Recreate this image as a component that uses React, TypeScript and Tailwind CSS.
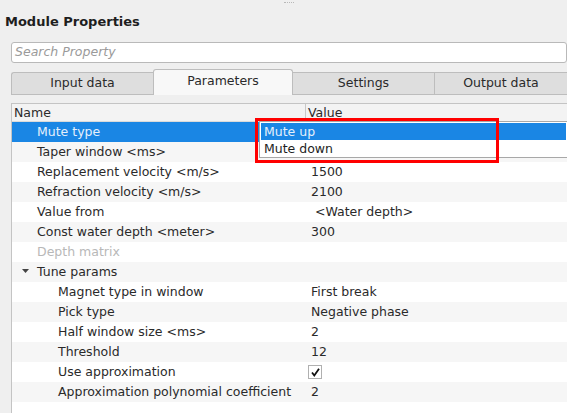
import React from "react";

type Row = { name: string; value?: React.ReactNode; level: number; disabled?: boolean; group?: boolean; selected?: boolean };

const rows: Row[] = [
  { name: "Mute type", level: 1, selected: true },
  { name: "Taper window <ms>", level: 1 },
  { name: "Replacement velocity <m/s>", value: "1500", level: 1 },
  { name: "Refraction velocity <m/s>", value: "2100", level: 1 },
  { name: "Value from", value: " <Water depth>", level: 1 },
  { name: "Const water depth <meter>", value: "300", level: 1 },
  { name: "Depth matrix", level: 1, disabled: true },
  { name: "Tune params", level: 1, group: true },
  { name: "Magnet type in window", value: "First break", level: 2 },
  { name: "Pick type", value: "Negative phase", level: 2 },
  { name: "Half window size <ms>", value: "2", level: 2 },
  { name: "Threshold", value: "12", level: 2 },
  { name: "Use approximation", value: "check", level: 2 },
  { name: "Approximation polynomial coefficient", value: "2", level: 2 },
];

export default function App() {
  const font = { fontFamily: '"DejaVu Sans", "Liberation Sans", sans-serif' };
  return (
    <div className="w-[567px] h-[413px] bg-[#efefef] overflow-hidden relative text-[12.5px] text-[#2a2a2a]" style={font}>
      <div className="absolute left-[284px] top-[2px] w-[10px] h-[1px] border-t border-dotted border-[#b8b8b8]" />
      <div className="h-[42px] pl-[5px] pt-[12px] font-bold text-[13px] text-[#1e1e1e]">Module Properties</div>
      <div className="ml-[11px] h-[21px] bg-white border border-[#b9b9b9] rounded-[3px] flex items-center pl-[3px] italic text-[#9a9a9a]">
        Search Property
      </div>
      <div className="ml-[11px] mt-[6px] h-[26px] flex items-end">
        <div className="w-[142px] h-[23px] bg-[#dedede] border border-[#bdbdbd] border-r-0 flex items-center justify-center rounded-tl-[3px]">Input data</div>
        <div className="w-[140px] h-[26px] bg-[#f8f8f8] border border-b-0 border-[#bdbdbd] rounded-t-[3px] flex items-center justify-center pb-[2px]">Parameters</div>
        <div className="w-[142px] h-[23px] bg-[#dedede] border border-[#bdbdbd] border-l-0 flex items-center justify-center">Settings</div>
        <div className="flex-1 h-[23px] bg-[#dedede] border border-[#bdbdbd] border-l-0 border-r-0 flex items-center justify-center">Output data</div>
      </div>
      <div className="ml-[11px] mt-[8px] bg-white border-l border-t border-[#c4c4c4] relative h-[320px]">
        <div className="h-[18px] flex bg-[#f3f3f3] border-b border-[#dadada]">
          <div className="w-[294px] pl-[2px] border-r border-[#c8c8c8] leading-[18px]">Name</div>
          <div className="flex-1 pl-[2px] leading-[18px]">Value</div>
        </div>
        {rows.map((r, i) => {
          const bg = r.selected ? "bg-[#1a86e4] text-[#e6f0fb]" : i % 2 === 1 ? "bg-[#f6f6f6]" : "bg-white";
          return (
            <div key={i} className={`h-[20px] flex items-center ${bg}`}>
              <div className={`w-[295px] relative ${r.level === 2 ? "pl-[46px]" : "pl-[25px]"} ${r.disabled ? "text-[#b8b8b8]" : ""}`}>
                {r.group && (
                  <svg className="absolute left-[9px] top-[5px]" width="9" height="6" viewBox="0 0 9 6">
                    <path d="M1 1 L8 1 L4.5 5 Z" fill="#444" />
                  </svg>
                )}
                {r.name}
              </div>
              <div className="flex-1 pl-[4px] whitespace-pre">
                {r.value === "check" ? (
                  <div className="w-[14px] h-[14px] -ml-[3px] border border-[#b0b0b0] bg-white flex items-center justify-center">
                    <svg width="11" height="11" viewBox="0 0 11 11">
                      <path d="M2 5.5 L4.3 8.5 L9 1.8" stroke="#111" strokeWidth="1.8" fill="none" />
                    </svg>
                  </div>
                ) : (
                  r.value
                )}
              </div>
            </div>
          );
        })}
        <div className="absolute left-[247px] top-[17px] right-0 h-[37px] bg-white border border-[#a8a8a8] border-r-0 p-[1px] text-[#1e1e1e]">
          <div className="h-[17px] bg-[#1a86e4] text-[#e6f0fb] pl-[3px] leading-[17px]">Mute up</div>
          <div className="h-[17px] pl-[3px] leading-[17px]">Mute down</div>
        </div>
        <div className="absolute left-[243px] top-[14px] w-[244px] h-[45px] border-[3px] border-[#ff0000]" />
      </div>
    </div>
  );
}
